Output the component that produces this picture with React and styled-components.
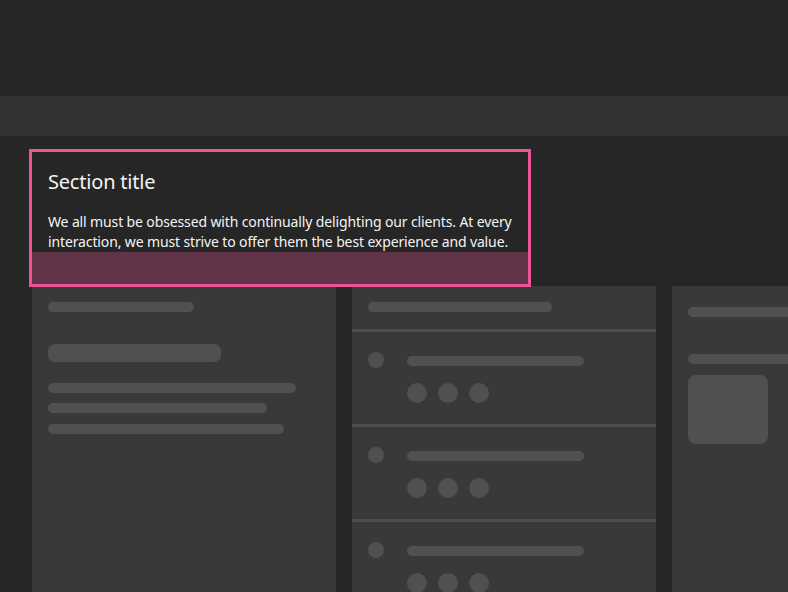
import React from "react";
import styled, { createGlobalStyle } from "styled-components";

const Global = createGlobalStyle`
  html, body { margin: 0; padding: 0; background: #262626; overflow: hidden; }
  body { width: 788px; height: 592px; font-family: "Noto Sans", "Open Sans", sans-serif; }
`;

const Page = styled.div`
  width: 788px;
  height: 592px;
  overflow: hidden;
  background: #262626;
  display: flex;
  flex-direction: column;
`;

const Header = styled.div`
  height: 96px;
  flex: none;
`;

const Band = styled.div`
  height: 40px;
  background: #333333;
  flex: none;
`;

const Content = styled.div`
  padding: 16px 0 0 32px;
  display: flex;
  flex-direction: column;
`;

const Section = styled.section`
  width: 496px;
  box-sizing: border-box;
  padding: 16px 16px 0;
  outline: 3px solid #ee5396;
  position: relative;
  color: #f4f4f4;
`;

const Title = styled.h2`
  margin: 0 0 16px;
  font-size: 20px;
  line-height: 28px;
  font-weight: 400;
  letter-spacing: -0.2px;
`;

const Body = styled.p`
  margin: 0;
  font-size: 14px;
  line-height: 20px;
  letter-spacing: -0.13px;
  white-space: nowrap;
`;

const PaddingHighlight = styled.div`
  height: 32px;
  margin: 0 -16px;
  background: #61344a;
`;

const Grid = styled.div`
  margin-top: 2px;
  display: grid;
  grid-template-columns: repeat(3, 304px);
  gap: 16px;
`;

const Column = styled.div`
  background: #393939;
  height: 320px;
  padding: ${(p) => p.$pad || "16px"};
  box-sizing: border-box;
  display: flex;
  flex-direction: column;
`;

const ListColumn = styled.div`
  background: #393939;
  height: 320px;
  display: flex;
  flex-direction: column;
`;

const Bone = styled.div`
  width: ${(p) => p.$w}px;
  height: ${(p) => p.$h || 10}px;
  border-radius: ${(p) => p.$r || 5}px;
  background: #505050;
  margin-top: ${(p) => p.$mt || 0}px;
  flex: none;
`;

const ListHeader = styled.div`
  padding: 16px 16px 17px;
  border-bottom: 3px solid #4d4d4d;
`;

const Item = styled.div`
  display: flex;
  gap: 23px;
  padding: 20px 16px 21px;
  border-bottom: 3px solid #4d4d4d;
  &:last-child { border-bottom: none; }
`;

const Avatar = styled.div`
  width: 16px;
  height: 16px;
  border-radius: 50%;
  background: #505050;
  flex: none;
`;

const ItemBody = styled.div`
  display: flex;
  flex-direction: column;
  padding-top: 4px;
`;

const Dots = styled.div`
  display: flex;
  gap: 11px;
  margin-top: 17px;
`;

const Dot = styled.div`
  width: 20px;
  height: 20px;
  border-radius: 50%;
  background: #505050;
`;

const Thumb = styled.div`
  width: 80px;
  height: 69px;
  border-radius: 8px;
  background: #505050;
  margin-top: 11px;
`;

const items = [0, 1, 2];

export default function App() {
  return (
    <>
      <Global />
      <Page>
        <Header />
        <Band />
        <Content>
          <Section>
            <Title>Section title</Title>
            <Body>
              We all must be obsessed with continually delighting our clients. At every
              <br />
              interaction, we must strive to offer them the best experience and value.
            </Body>
            <PaddingHighlight />
          </Section>
          <Grid>
            <Column>
              <Bone $w={146} />
              <Bone $w={173} $h={18} $r={7} $mt={32} />
              <Bone $w={248} $mt={21} />
              <Bone $w={219} $mt={10} />
              <Bone $w={236} $mt={11} />
            </Column>
            <ListColumn>
              <ListHeader>
                <Bone $w={184} />
              </ListHeader>
              {items.map((i) => (
                <Item key={i}>
                  <Avatar />
                  <ItemBody>
                    <Bone $w={177} />
                    <Dots>
                      <Dot />
                      <Dot />
                      <Dot />
                    </Dots>
                  </ItemBody>
                </Item>
              ))}
            </ListColumn>
            <Column $pad="21px 16px">
              <Bone $w={272} />
              <Bone $w={272} $mt={37} />
              <Thumb />
            </Column>
          </Grid>
        </Content>
      </Page>
    </>
  );
}
